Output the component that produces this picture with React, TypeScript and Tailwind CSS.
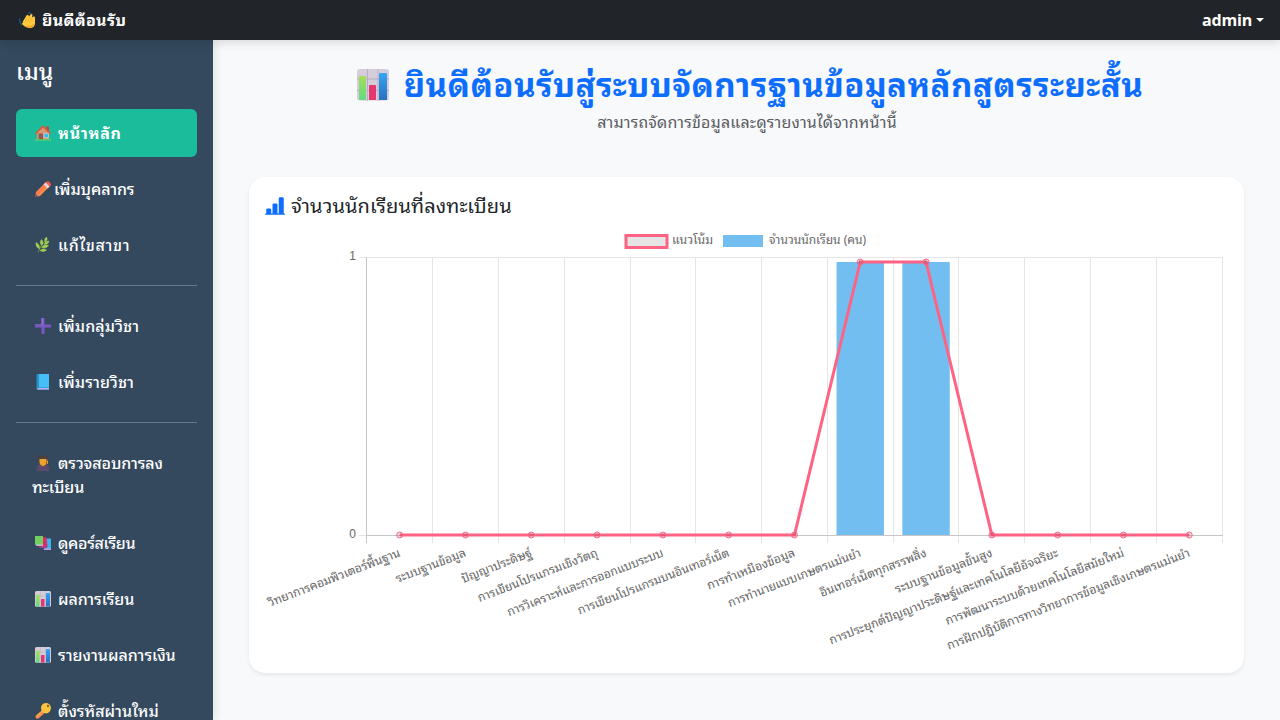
import type { ReactNode } from "react";

function Icon({ className, children }: { className: string; children: ReactNode }) {
  return (
    <svg viewBox="0 0 32 32" className={`shrink-0 ${className}`} aria-hidden="true">
      {children}
    </svg>
  );
}

const glyphs = {
  wave: (
    <>
      <path d="M1 14c0 5 1 8 4 11M19 2c3-1 6 1 6 5" fill="none" stroke="#1d5c8f" strokeWidth="2.4" strokeLinecap="round" />
      <path d="M7 20L15 7q2-3 4 0l1 2 3-4q3-2 4 1l-1 5 3-2q3-1 3 2v11c0 6-4 10-10 10-7 0-11-3-15-7-2-2 0-4 2-3z" fill="#ffc83d" />
      <path d="M16 11l-4 9M21 11l-4 9M26 12l-5 8" stroke="#eda52f" strokeWidth="1.2" fill="none" />
      <path d="M9 26c6 4 15 4 22-3-2 6-6 8-11 8-5 0-8-2-11-5z" fill="#f59a23" />
    </>
  ),
  house: (
    <>
      <path d="M4 15L16 5l12 10v14H4z" fill="#d99a72" />
      <path d="M22 3h6v11l-6-5z" fill="#b5523f" />
      <path d="M0 17L15 1q1-1 2 0l15 16-2 2L16 5 2 19z" fill="#e2583e" />
      <path d="M7 17h9v13H7z" fill="#8d5a58" />
      <path d="M18 17h9v8h-9z" fill="#39b6f5" stroke="#e8e0dc" strokeWidth="1" />
      <path d="M0 28.500h32v3H0z" fill="#59cf66" />
    </>
  ),
  crayon: (
    <>
      <path d="M0 32l2-10L22 2l8 8-20 20z" fill="#f88c46" />
      <path d="M21 3l3-2q2-1 4 0l3 4q2 2 0 4l-3 3z" fill="#f65b4f" />
      <path d="M17 7l4-4 8 8-4 4z" fill="#e3d5df" />
      <path d="M0 32l1-7 6 6z" fill="#7c4c68" />
      <path d="M3 23L19 8l2 3L6 27z" fill="#ff7456" />
    </>
  ),
  herb: (
    <>
      <path d="M6 31C10 20 15 12 23 5" fill="none" stroke="#699b40" strokeWidth="2" />
      <path d="M20 10c-2-5 0-8 3-10 3 4 1 7-3 10zM14 17C9 13 10 8 13 5c4 4 4 8 1 12zM9 24C3 21 1 16 2 11c6 3 8 7 7 13zM18 15c1-5 5-7 10-7 0 5-5 8-10 7zM13 21c3-5 9-6 14-4-3 5-9 6-14 4zM10 27c4-4 9-4 13-1-4 4-9 4-13 1z" fill="#a5cf50" stroke="#a5cf50" strokeWidth=".8" />
    </>
  ),
  plus: (
    <>
      <path d="M13 0h6v13h13v6H19v13h-6V19H0v-6h13z" fill="#7a58c1" />
      <path d="M13 0h3v14H0v-1h13z" fill="#8f6fd2" />
    </>
  ),
  book: (
    <>
      <path d="M3 2q0-2 2-2h23v32H6q-3 0-3-3z" fill="#2e8fc7" />
      <path d="M8 0h20v27H8z" fill="#45bff5" />
      <path d="M5 28h23v3H6q-2-1-1-3z" fill="#c0a9ea" />
    </>
  ),
  student: (
    <>
      <path d="M8 6h16v16H8z" fill="#60413b" />
      <path d="M3 32v-6q1-7 9-8h8q7 1 8 8v6z" fill="#594a6b" />
      <path d="M9 6h14v8q-1 8-7 8t-7-8z" fill="#eda22a" />
      <path d="M6 3l10-3 10 3v5H6z" fill="#4c403e" />
      <path d="M25 11v7" stroke="#e0a02e" strokeWidth="2" />
      <path d="M12 20l4 4 4-4v5h-8z" fill="#7c4d55" />
    </>
  ),
  books: (
    <>
      <path d="M19 7h13v21H20z" fill="#3cb5ef" />
      <path d="M17 27h15v3H18z" fill="#bda0e4" />
      <path d="M14 4l9 1 2 19-11 1z" fill="#e02a66" />
      <path d="M7 23h17v3H10z" fill="#a24687" />
      <path d="M0 2h16v18H2q-2 0-2-2z" fill="#72cf61" />
      <path d="M1 19h15v3H3z" fill="#c9b4e0" />
    </>
  ),
  chart: (
    <>
      <rect width="32" height="31.500" rx="3" fill="#d5cddc" />
      <path d="M0 10h32M0 21.500h32M10.500 0v32M21 0v32" stroke="#b7adbf" strokeWidth="1" />
      <path d="M2 8q0-1 1-1h5q1 0 1 1v23H2z" fill="url(#bar-green)" />
      <path d="M12 17q0-1 1-1h5q1 0 1 1v14h-7z" fill="#e6366f" />
      <path d="M22 5q0-1 1-1h6q1 0 1 1v26h-8z" fill="url(#bar-blue)" />
    </>
  ),
  key: (
    <>
      <path d="M15 14l5 5L7 31H2l-1-5z" fill="#fa9146" />
      <path d="M12 9q1-8 9-9 10 0 11 10-1 9-9 11-11-1-11-12z" fill="#fbc43c" />
      <circle cx="26" cy="6" r="2.300" fill="#705b4a" />
      <path d="M3 26l13-12" stroke="#ffb455" strokeWidth="2" />
    </>
  ),
};

type GlyphName = keyof typeof glyphs;
type Entry = { icon: GlyphName; label: string; text: string; active?: boolean; tight?: boolean };

const sections: Entry[][] = [
  [
    { icon: "house", label: "หน้าหลัก", text: "font-bold tracking-[0.7px]", active: true },
    { icon: "crayon", label: "เพิ่มบุคลากร", text: "font-medium tracking-[-0.1px]", tight: true },
    { icon: "herb", label: "แก้ไขสาขา", text: "font-medium tracking-[0.65px]" },
  ],
  [
    { icon: "plus", label: "เพิ่มกลุ่มวิชา", text: "font-medium tracking-[0.1px]" },
    { icon: "book", label: "เพิ่มรายวิชา", text: "font-medium tracking-[0.1px]" },
  ],
  [
    { icon: "student", label: "ตรวจสอบการลงทะเบียน", text: "font-medium tracking-[-0.1px]" },
    { icon: "books", label: "ดูคอร์สเรียน", text: "font-medium tracking-[-0.35px]" },
    { icon: "chart", label: "ผลการเรียน", text: "font-medium tracking-[-0.1px]" },
    { icon: "chart", label: "รายงานผลการเงิน", text: "font-medium" },
    { icon: "key", label: "ตั้งรหัสผ่านใหม่", text: "font-medium" },
  ],
];

function Sidebar() {
  return (
    <aside className="w-[213px] shrink-0 overflow-hidden bg-[#34495e] px-4 pt-4 text-white shadow-[2px_0_10px_rgba(0,0,0,0.1)]">
      <h2 className="mb-[23px] text-[23px] leading-[30px] font-medium">เมนู</h2>
      {sections.map((items, s) => (
        <nav key={s} className={s > 0 ? "mt-4 border-t border-[#67788a] pt-4" : ""}>
          <ul className="flex flex-col gap-2">
            {items.map((item) => (
              <li
                key={item.label}
                className={`rounded-md px-4 py-3 text-[16px] leading-6 ${item.active ? "bg-[#1abc9c]" : ""}`}
              >
                <Icon className={`ml-[3px] inline-block size-4 align-[-2px] ${item.tight ? "mr-[3px]" : "mr-[7px]"}`}>
                  {glyphs[item.icon]}
                </Icon>
                <span className={item.text}>{item.label}</span>
              </li>
            ))}
          </ul>
        </nav>
      ))}
    </aside>
  );
}

const courses = [
  { name: "วิทยาการคอมพิวเตอร์พื้นฐาน", length: 142, students: 0 },
  { name: "ระบบฐานข้อมูล", length: 76, students: 0 },
  { name: "ปัญญาประดิษฐ์", length: 76, students: 0 },
  { name: "การเขียนโปรแกรมเชิงวัตถุ", length: 129, students: 0 },
  { name: "การวิเคราะห์และการออกแบบระบบ", length: 168, students: 0 },
  { name: "การเขียนโปรแกรมบนอินเทอร์เน็ต", length: 163, students: 0 },
  { name: "การทำเหมืองข้อมูล", length: 95, students: 0 },
  { name: "การทำนายแบบเกษตรแม่นยำ", length: 143, students: 1 },
  { name: "อินเทอร์เน็ตทุกสรรพสิ่ง", length: 115, students: 1 },
  { name: "ระบบฐานข้อมูลขั้นสูง", length: 105, students: 0 },
  { name: "การประยุกต์ปัญญาประดิษฐ์และเทคโนโลยีอัจฉริยะ", length: 246, students: 0 },
  { name: "การพัฒนาระบบด้วยเทคโนโลยีสมัยใหม่", length: 192, students: 0 },
  { name: "การฝึกปฏิบัติการทางวิทยาการข้อมูลเชิงเกษตรแม่นยำ", length: 261, students: 0 },
];

const LEFT = 101.35;
const STEP = 65.8;
const BASE = 311;
const PEAK = 38;
const gridLine = (i: number) => Math.round(LEFT + (STEP - 0.01) * i) + 0.5;
const centre = (i: number) => LEFT + 0.4 + STEP * (i + 0.5);
const level = (n: number) => (n ? PEAK : BASE);

function EnrolmentChart() {
  const points = courses.map((c, i) => `${centre(i)},${level(c.students)}`).join(" ");
  return (
    <svg viewBox="0 0 963 432" className="block h-[432px] w-[963px] overflow-visible" fontSize="12" fill="#666">
      <rect x="361" y="11.500" width="41" height="12" fill="#e5e5e5" stroke="#ff6384" strokeWidth="3" />
      <text x="407" y="20" textLength="41" lengthAdjust="spacingAndGlyphs">แนวโน้ม</text>
      <rect x="458" y="11" width="40" height="12" fill="#72bef1" />
      <text x="504" y="20" textLength="97" lengthAdjust="spacingAndGlyphs">จำนวนนักเรียน (คน)</text>
      <text x="91" y="36" textAnchor="end" className="font-['Liberation_Sans']">1</text>
      <text x="91" y="314" textAnchor="end" className="font-['Liberation_Sans']">0</text>
      <g shapeRendering="crispEdges" stroke="#e5e5e5">
        <path d="M94 33.500H958" />
        <path d="M94 311.500H102" />
        {courses.map((c, i) => (
          <path key={c.name} d={`M${gridLine(i + 1)} 33V319`} />
        ))}
        <path d="M101.500 33V319M102 311.500H958" stroke="#c6c6c6" />
      </g>
      {courses.map((c, i) =>
        c.students ? <rect key={c.name} x={centre(i) - 23.7} y={PEAK} width="47.400" height={BASE - PEAK} fill="#72bef1" /> : null,
      )}
      <polyline points={points} fill="none" stroke="#ff6384" strokeWidth="3" />
      {courses.map((c, i) => (
        <circle key={c.name} cx={centre(i)} cy={level(c.students)} r="3" fill="rgba(0,0,0,0.1)" stroke="#ff6384" />
      ))}
      {courses.map((c, i) => (
        <text
          key={c.name}
          transform={`translate(${centre(i) + 1.4} 332) rotate(-21.2)`}
          textAnchor="end"
          textLength={c.length - 1.5}
          lengthAdjust="spacingAndGlyphs"
        >
          {c.name}
        </text>
      ))}
    </svg>
  );
}

export default function App() {
  return (
    <div className="flex h-[720px] w-[1280px] flex-col overflow-hidden bg-[#f8f9fb] font-['Noto_Sans','Leelawadee_UI','Noto_Sans_Thai_Looped','Noto_Looped_Thai','Waree','Loma','Garuda','Droid_Sans_Thai','FreeSans','Noto_Serif_Thai',sans-serif] text-[#212529]">
      <svg className="absolute size-0" aria-hidden="true">
        <defs>
          <linearGradient id="bar-green" x2="0" y2="1">
            <stop stopColor="#a9dc55" />
            <stop offset="1" stopColor="#60da86" />
          </linearGradient>
          <linearGradient id="bar-blue" x2="0" y2="1">
            <stop stopColor="#35a6f5" />
            <stop offset="1" stopColor="#2c70bd" />
          </linearGradient>
        </defs>
      </svg>
      <header className="relative z-10 flex h-10 shrink-0 items-center justify-between bg-[#212529] pr-4 pl-[19px] text-base font-bold text-white shadow-[0_2px_10px_rgba(0,0,0,0.15)]">
        <div className="flex items-center gap-[7px]">
          <Icon className="size-4">{glyphs.wave}</Icon>
          <span className="tracking-[0.35px]">ยินดีต้อนรับ</span>
        </div>
        <div className="flex items-center gap-1">
          <span className="font-['Open_Sans'] font-bold tracking-[-0.2px]">admin</span>
          <span className="border-x-4 border-t-4 border-x-transparent border-t-white" />
        </div>
      </header>
      <div className="flex min-h-0 grow">
        <Sidebar />
        <main className="flex grow flex-col px-9 pt-6">
          <div className="flex h-[42px] items-center justify-center gap-[15px] pl-[7px] text-[#0d6efd]">
            <Icon className="size-8">{glyphs.chart}</Icon>
            <h1 className="pb-px text-[33px] leading-[42px] font-bold tracking-[0.44px] whitespace-nowrap">ยินดีต้อนรับสู่ระบบจัดการฐานข้อมูลหลักสูตรระยะสั้น</h1>
          </div>
          <p className="mt-1 pl-px text-center text-base leading-6 tracking-[0.18px] text-[#595c5f]">สามารถจัดการข้อมูลและดูรายงานได้จากหน้านี้</p>
          <section className="mt-[43px] h-[496px] w-[995px] rounded-2xl bg-white px-4 pt-[17px] shadow-[0_2px_4px_rgba(0,0,0,0.075)]">
            <h2 className="flex h-6 items-center gap-1.5 text-xl leading-6">
              <svg viewBox="0 0 16 16" className="size-5" fill="#0d6efd" aria-hidden="true">
                <path d="M1 11a1 1 0 0 1 1-1h2a1 1 0 0 1 1 1v3H1zM6 7a1 1 0 0 1 1-1h2a1 1 0 0 1 1 1v7H6zM11 2a1 1 0 0 1 1-1h2a1 1 0 0 1 1 1v12h-4zM.500 14h15a.5.500 0 0 1 0 1H.500a.5.500 0 0 1 0-1" />
              </svg>
              <span className="tracking-[0.1px]">จำนวนนักเรียนที่ลงทะเบียน</span>
            </h2>
            <div className="mt-1.5">
              <EnrolmentChart />
            </div>
          </section>
        </main>
      </div>
    </div>
  );
}
